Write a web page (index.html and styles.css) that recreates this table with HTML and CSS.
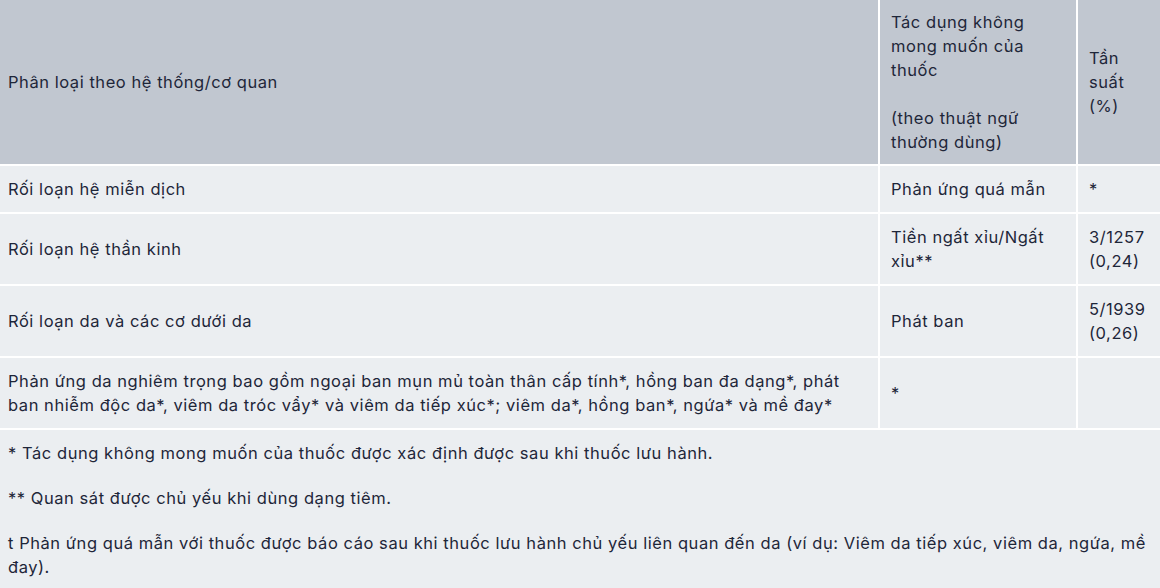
FILE: index.html
```html
<!DOCTYPE html>
<html lang="vi">
<head>
<meta charset="utf-8">
<title>Tác dụng không mong muốn</title>
<link rel="stylesheet" href="styles.css">
</head>
<body>
<table class="adr-table">
  <colgroup>
    <col class="col-organ">
    <col class="col-effect">
    <col class="col-freq">
  </colgroup>
  <thead>
    <tr>
      <th class="cell first">Phân loại theo hệ thống/cơ quan</th>
      <th class="cell">Tác dụng không mong muốn của thuốc<br><br>(theo thuật ngữ thường dùng)</th>
      <th class="cell">Tần suất (%)</th>
    </tr>
  </thead>
  <tbody>
    <tr>
      <td class="cell first">Rối loạn hệ miễn dịch</td>
      <td class="cell">Phản ứng quá mẫn</td>
      <td class="cell">*</td>
    </tr>
    <tr>
      <td class="cell first">Rối loạn hệ thần kinh</td>
      <td class="cell">Tiền ngất xỉu/Ngất xỉu**</td>
      <td class="cell">3/1257 (0,24)</td>
    </tr>
    <tr>
      <td class="cell first">Rối loạn da và các cơ dưới da</td>
      <td class="cell">Phát ban</td>
      <td class="cell">5/1939 (0,26)</td>
    </tr>
    <tr>
      <td class="cell first">Phản ứng da nghiêm trọng bao gồm ngoại ban mụn mủ toàn thân cấp tính*, hồng ban đa dạng*, phát ban nhiễm độc da*, viêm da tróc vẩy* và viêm da tiếp xúc*; viêm da*, hồng ban*, ngứa* và mề đay*</td>
      <td class="cell">*</td>
      <td class="cell"></td>
    </tr>
    <tr>
      <td class="cell first notes" colspan="3">
        <p class="note">* Tác dụng không mong muốn của thuốc được xác định được sau khi thuốc lưu hành.</p>
        <p class="note">** Quan sát được chủ yếu khi dùng dạng tiêm.</p>
        <p class="note">t Phản ứng quá mẫn với thuốc được báo cáo sau khi thuốc lưu hành chủ yếu liên quan đến da (ví dụ: Viêm da tiếp xúc, viêm da, ngứa, mề đay).</p>
      </td>
    </tr>
  </tbody>
</table>
</body>
</html>
```
FILE: styles.css
```css
html, body {
  margin: 0;
  padding: 0;
  background: #ffffff;
}

body {
  font-family: Inter, "Noto Sans", "Liberation Sans", sans-serif;
  font-size: 16.5px;
  line-height: 24px;
  letter-spacing: 0.55px;
  color: #1e2639;
}

.adr-table {
  width: 1160px;
  table-layout: fixed;
  border-collapse: separate;
  border-spacing: 0;
}

.col-organ { width: 878px; }
.col-effect { width: 198px; }
.col-freq { width: 84px; }

.cell {
  box-sizing: border-box;
  padding: 11px;
  text-align: left;
  vertical-align: middle;
  font-weight: 400;
  background: #ebeef1;
  border-left: 2px solid #ffffff;
  border-bottom: 2px solid #ffffff;
}

.cell.first {
  border-left: 0;
  padding-left: 8px;
}

thead .cell {
  background: #c1c7d0;
  padding-top: 10px;
  padding-bottom: 10px;
}

.notes {
  border-bottom: 0;
}

.note {
  margin: 0 0 21px;
}

.note:last-child {
  margin-bottom: 0;
}
```
